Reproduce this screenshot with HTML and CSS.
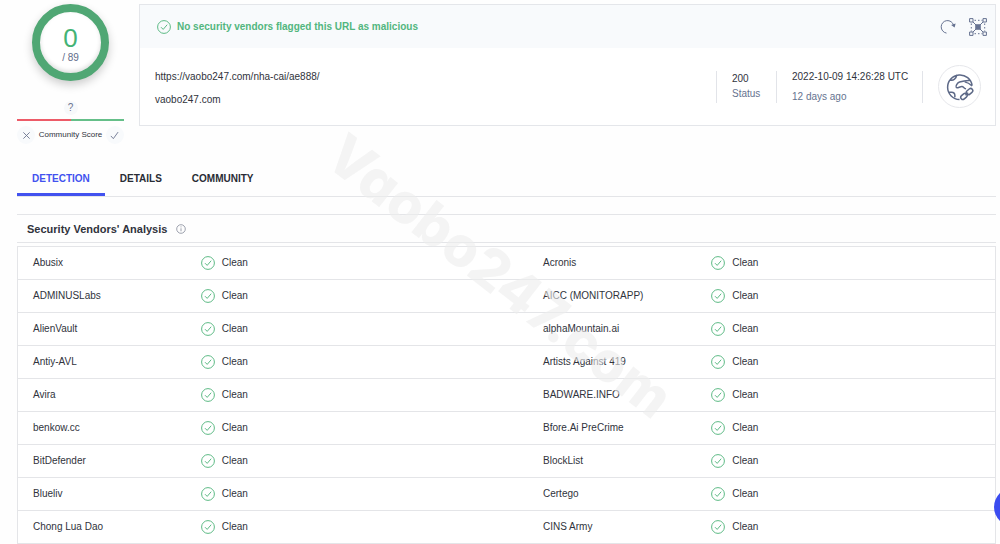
FILE: index.html
```
<!DOCTYPE html>
<html lang="en">
<head>
<meta charset="utf-8">
<meta name="viewport" content="width=device-width, initial-scale=1">
<title>URL report</title>
<link rel="stylesheet" href="styles.css">
</head>
<body>
<svg class="sprite" aria-hidden="true">
  <symbol id="check-circle" viewBox="0 0 14 14"><circle cx="7" cy="7" r="6.4"/><path d="M4 7.2l2.2 2.2L10.200 4.700"/></symbol>
</svg>
<div class="page">
  <header class="summary">
    <aside class="score">
      <div class="ring"><span class="ring-value">0</span><span class="ring-total">/ 89</span></div>
      <div class="community-mark">?</div>
      <div class="community-bar"></div>
      <div class="community">
        <button class="vote" aria-label="Vote malicious"><svg viewBox="0 0 10 10"><path d="M1.500 1.500l7 7M8.500 1.500l-7 7"/></svg></button>
        <span>Community Score</span>
        <button class="vote" aria-label="Vote harmless"><svg viewBox="0 0 10 10"><path d="M1 5.500l2.700 3L9 1.200"/></svg></button>
      </div>
    </aside>
    <section class="card">
      <div class="card-head">
        <svg class="check"><use href="#check-circle"/></svg>
        <strong class="verdict">No security vendors flagged this URL as malicious</strong>
        <button class="tool" aria-label="Reanalyze"><svg viewBox="0 0 18 18"><path d="M7.500 15.100A6.300 6.300 0 1 1 14.600 7.300"/><path class="solid" d="M12.100 7.100l4.500-1.500-1 4z"/></svg></button>
        <button class="tool" aria-label="Open graph"><svg viewBox="0 0 18 18"><path d="M.6.600h3.400v3.400H.6zM14 .6h3.400v3.400H14zM.6 14h3.400v3.400H.6zM14 14h3.400v3.400H14zM4 4l10 10M14 4L4 14"/><path stroke-dasharray="1.500 2" d="M5.500 2.300h8M5.500 15.700h8M2.300 5.500v8M15.700 5.500v8"/><path class="solid" d="M6.200 6.200h5.600v5.600H6.200z"/></svg></button>
      </div>
      <div class="card-body">
        <div class="urls"><span>https://vaobo247.com/nha-cai/ae888/</span><span>vaobo247.com</span></div>
        <div class="fact status"><span>200</span><span class="muted">Status</span></div>
        <div class="fact date"><span>2022-10-09 14:26:28 UTC</span><span class="muted">12 days ago</span></div>
        <div class="fact kind"><div class="globe"><svg viewBox="0 0 30 30"><path d="M14.500 28.500A13.200 13.200 0 1 1 28 13.500M4.500 7.500c3.500 1 6.500-1.500 7-5.500M2.500 20.500H6c2.500 0 3.500 1.200 3.500 3.500v2M25.500 8c-4-.3-8 .7-11 1.700-2.500.8-4.500 4.800-3.500 5.800s4-1 6-1 2.500 2.500 4.500 2.500M20 9.500c3 .5 5.500 2 8 4.500"/><rect x="15.500" y="22.800" width="7.500" height="4.600" rx="2.300" transform="rotate(-40 19.200 25.100)"/><rect x="21.500" y="17.600" width="7.500" height="4.600" rx="2.300" transform="rotate(-40 25.200 19.900)"/><path d="M20.800 23.800l3-2.700"/></svg></div></div>
      </div>
    </section>
  </header>
  <nav class="tabs">
    <a class="tab active" href="#detection">DETECTION</a>
    <a class="tab" href="#details">DETAILS</a>
    <a class="tab" href="#community">COMMUNITY</a>
  </nav>
  <main id="detection">
    <h2 class="section-title">Security Vendors' Analysis
      <svg class="info" viewBox="0 0 10 10"><circle cx="5" cy="5" r="4.300"/><path d="M5 4.300v3M5 2.400v1"/></svg></h2>
    <table class="vendors">
      <colgroup><col class="col-name"><col class="col-result"><col class="col-name"><col></colgroup>
      <tbody>
        <tr><td>Abusix</td><td><div class="result"><svg class="check"><use href="#check-circle"/></svg>Clean</div></td><td>Acronis</td><td><div class="result"><svg class="check"><use href="#check-circle"/></svg>Clean</div></td></tr>
        <tr><td>ADMINUSLabs</td><td><div class="result"><svg class="check"><use href="#check-circle"/></svg>Clean</div></td><td>AICC (MONITORAPP)</td><td><div class="result"><svg class="check"><use href="#check-circle"/></svg>Clean</div></td></tr>
        <tr><td>AlienVault</td><td><div class="result"><svg class="check"><use href="#check-circle"/></svg>Clean</div></td><td>alphaMountain.ai</td><td><div class="result"><svg class="check"><use href="#check-circle"/></svg>Clean</div></td></tr>
        <tr><td>Antiy-AVL</td><td><div class="result"><svg class="check"><use href="#check-circle"/></svg>Clean</div></td><td>Artists Against 419</td><td><div class="result"><svg class="check"><use href="#check-circle"/></svg>Clean</div></td></tr>
        <tr><td>Avira</td><td><div class="result"><svg class="check"><use href="#check-circle"/></svg>Clean</div></td><td>BADWARE.INFO</td><td><div class="result"><svg class="check"><use href="#check-circle"/></svg>Clean</div></td></tr>
        <tr><td>benkow.cc</td><td><div class="result"><svg class="check"><use href="#check-circle"/></svg>Clean</div></td><td>Bfore.Ai PreCrime</td><td><div class="result"><svg class="check"><use href="#check-circle"/></svg>Clean</div></td></tr>
        <tr><td>BitDefender</td><td><div class="result"><svg class="check"><use href="#check-circle"/></svg>Clean</div></td><td>BlockList</td><td><div class="result"><svg class="check"><use href="#check-circle"/></svg>Clean</div></td></tr>
        <tr><td>Blueliv</td><td><div class="result"><svg class="check"><use href="#check-circle"/></svg>Clean</div></td><td>Certego</td><td><div class="result"><svg class="check"><use href="#check-circle"/></svg>Clean</div></td></tr>
        <tr><td>Chong Lua Dao</td><td><div class="result"><svg class="check"><use href="#check-circle"/></svg>Clean</div></td><td>CINS Army</td><td><div class="result"><svg class="check"><use href="#check-circle"/></svg>Clean</div></td></tr>
      </tbody>
    </table>
  </main>
</div>
<div class="watermark" aria-hidden="true">Vaobo247.com</div>
<button class="chat" aria-label="Open chat"></button>
</body>
</html>
```
FILE: styles.css
```
* { box-sizing: border-box; }
body {
  margin: 0;
  overflow: hidden;
  background: #fefefe;
  color: #30333c;
  font: 10px/14px "Liberation Sans", Arial, sans-serif;
}
button { padding: 0; border: 0; background: none; color: inherit; font: inherit; }
svg { display: block; fill: none; stroke: currentColor; }
.sprite { position: absolute; width: 0; height: 0; }
.solid { fill: currentColor; stroke: none; }
.page { padding: 4px 4px 0 17px; }
.summary { display: flex; align-items: flex-start; gap: 15px; }

.score { flex: none; width: 107px; display: flex; flex-direction: column; align-items: center; }
.ring {
  width: 77px;
  height: 77px;
  padding-top: 4px;
  display: flex;
  flex-direction: column;
  align-items: center;
  justify-content: center;
  border: 8px solid #50a774;
  border-radius: 50%;
  background: #fff;
  box-shadow: 0 4px 10px #0003, inset 0 -2px 4px #0002;
}
.ring-value { font-size: 26px; line-height: 26px; color: #44b375; }
.ring-total { color: #626c8a; }
.community-mark {
  width: 14px;
  height: 14px;
  margin: 20px 0 4px;
  border-radius: 50%;
  background: #f7f9fb;
  color: #6c7590;
  text-align: center;
}
.community-bar { width: 100%; height: 2px; background: linear-gradient(90deg, #ed5b68 50%, #65bf89 50%); }
.community {
  width: 100%;
  margin-top: 5px;
  display: flex;
  align-items: center;
  justify-content: space-between;
  font-size: 8px;
}
.vote { width: 18px; height: 18px; border-radius: 50%; background: #f8fafc; display: grid; place-items: center; color: #6b748e; }
.vote svg { width: 9px; height: 9px; }

.card { flex: 1; border: 1px solid #e4e6ea; background: #fff; }
.card-head { height: 43px; padding: 0 8px 0 17px; display: flex; align-items: center; gap: 6px; background: #f8fafc; color: #52b67e; }
.verdict { flex: 1; }
.check { flex: none; width: 14px; height: 14px; color: #5dba85; }
.tool { width: 18px; height: 18px; margin-left: 6px; color: #667291; }
.card-body { height: 77px; padding: 0 14px 0 15px; display: flex; align-items: center; }
.urls { flex: 1; display: flex; flex-direction: column; gap: 9px; padding-top: 4px; }
.fact { height: 32px; display: flex; flex-direction: column; justify-content: center; border-left: 1px solid #e2e4e9; padding: 0 15px; white-space: nowrap; }
.status { width: 60px; gap: 1px; }
.date { width: 146px; gap: 6px; }
.kind { padding-right: 0; }
.muted { color: #66738f; }
.globe { flex: none; width: 43px; height: 43px; display: grid; place-items: center; border: 1px solid #e6e7eb; border-radius: 50%; color: #5d6987; }
.globe svg { width: 28px; height: 28px; stroke-width: 1.6; }

.tabs { display: flex; margin-top: 16px; border-bottom: 1px solid #e4e5e8; }
.tab { height: 36px; padding: 12px 15px 0; color: #292c34; font-weight: bold; text-decoration: none; }
.tab.active { color: #4252ef; border-bottom: 3px solid #4252ef; }
.section-title {
  display: flex;
  align-items: center;
  gap: 9px;
  height: 29px;
  margin: 17px 0 3px;
  padding-left: 10px;
  border: solid #e4e5e8;
  border-width: 1px 0;
  font-size: 11px;
}
.info { width: 10px; height: 10px; color: #858a99; stroke-width: .8; }
.vendors { width: 100%; table-layout: fixed; border-collapse: collapse; border: 1px solid #e4e5e8; background: #fff; }
.col-name { width: 17.2%; }
.col-result { width: 35%; }
.vendors td { height: 33px; padding: 0 15px; border-bottom: 1px solid #e4e5e8; }
.result { display: flex; align-items: center; gap: 7px; }

.watermark {
  position: absolute;
  left: 50%;
  top: 276px;
  transform: translate(-50%, -50%) rotate(38deg);
  color: #ededed99;
  font: 800 56px/70px Inter, sans-serif;
  font-feature-settings: "cv11";
  pointer-events: none;
}
.chat { position: fixed; right: -32px; bottom: 18px; width: 38px; height: 38px; border-radius: 50%; background: #3b4cf0; }
```
